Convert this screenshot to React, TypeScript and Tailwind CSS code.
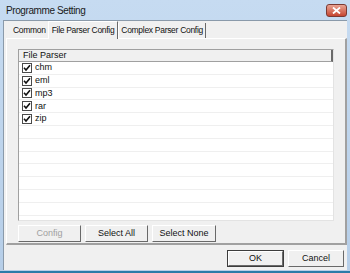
import React from "react";

const font = { fontFamily: '"Liberation Sans", Arial, sans-serif' };

function Check() {
  return (
    <span className="flex h-[10px] w-[10px] items-center justify-center border border-[#4a4a4a] bg-white">
      <svg width="8" height="8" viewBox="0 0 8 8">
        <path d="M1 3.8 L3 6 L7 1.2" stroke="#111" strokeWidth="1.6" fill="none" />
      </svg>
    </span>
  );
}

function Btn({ label, w, disabled, def }: { label: string; w: string; disabled?: boolean; def?: boolean }) {
  return (
    <div className={`${w} h-[17px] ${def ? "border border-[#3c3c3c]" : ""}`}>
      <div className="flex h-full w-full items-center justify-center border-t border-l border-t-white border-l-white border-r border-b border-r-[#696969] border-b-[#696969] bg-[#f0f0f0]">
        <span className={`text-[9px] leading-none ${disabled ? "text-[#a0a0a0]" : "text-[#111]"}`}>{label}</span>
      </div>
    </div>
  );
}

export default function App() {
  const items = ["chm", "eml", "mp3", "rar", "zip"];
  const rows = Array.from({ length: 13 });
  return (
    <div style={font} className="flex h-[273px] w-[350px] flex-col overflow-hidden bg-gradient-to-b from-[#c6dbf1] to-[#b6cee8] border-b-2 border-b-[#2b7ba8]">
      <div className="flex h-[20px] shrink-0 items-center pl-[6px] pr-[3px]">
        <span className="text-[10px] tracking-[-0.4px] text-[#1a1a1a]">Programme Setting</span>
        <div className="ml-auto mt-[1px] flex h-[13px] w-[21px] items-center justify-center rounded-[3px] border border-[#7b3a33] bg-gradient-to-b from-[#e8a393] to-[#c54430]">
          <svg width="9" height="7" viewBox="0 0 9 7">
            <path d="M1 0.5 L8 6.5 M8 0.5 L1 6.5" stroke="white" strokeWidth="1.8" />
          </svg>
        </div>
      </div>
      <div className="mx-[3px] mb-[1px] flex flex-1 flex-col border-l border-t border-[#8a9aaa] bg-[#f0f0f0]">
        {/* tabs */}
        <div className="flex h-[17px] items-end pl-[7px] text-[8.5px] tracking-[-0.3px] text-[#111]">
          <div className="flex h-[15px] items-center px-[2px]">Common</div>
          <div className="relative z-10 -mb-[1px] flex h-[18px] items-center border-t border-l border-t-white border-l-white border-r border-r-[#696969] bg-[#f0f0f0] px-[3px]">
            File Parser Config
          </div>
          <div className="flex h-[15px] items-center border-r border-r-[#696969] border-l border-l-white px-[2px]">Complex Parser Config</div>
        </div>
        {/* panel */}
        <div className="ml-[2px] flex h-[207px] w-[341px] flex-col border-t border-l border-t-white border-l-white border-r-2 border-b-2 border-r-[#a0a0a0] border-b-[#a0a0a0] px-[11px] pt-[10px]">
          <div className="h-[172px] w-[316px] overflow-hidden border border-t-[#a0a0a0] border-l-[#a0a0a0] border-r-[#e3e3e3] border-b-[#e3e3e3] bg-white">
            <div className="flex h-[12px] items-center border-r-2 border-b border-r-[#696969] border-b-[#a0a0a0] bg-[#f0f0f0] pl-[4px] text-[9px] text-[#111]">
              File Parser
            </div>
            {rows.map((_, i) => (
              <div key={i} className="flex h-[12.8px] items-center gap-[3px] border-b border-b-[#efefef] pl-[3px] text-[9px] text-[#111]">
                {i < items.length ? (
                  <>
                    <Check />
                    <span>{items[i]}</span>
                  </>
                ) : null}
              </div>
            ))}
          </div>
          <div className="mt-[4px] flex gap-[4px]">
            <Btn label="Config" w="w-[63px]" disabled />
            <Btn label="Select All" w="w-[63px]" />
            <Btn label="Select None" w="w-[64px]" />
          </div>
        </div>
        {/* bottom buttons */}
        <div className="mt-[5px] flex justify-end gap-[4px] pr-[3px]">
          <Btn label="OK" w="w-[57px]" def />
          <Btn label="Cancel" w="w-[56px]" />
        </div>
      </div>
    </div>
  );
}
